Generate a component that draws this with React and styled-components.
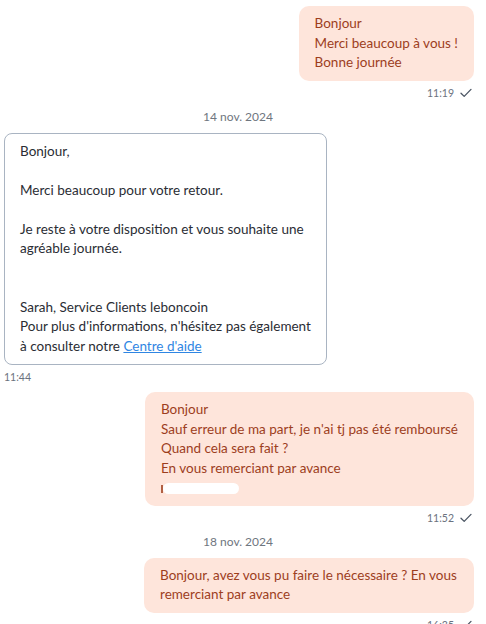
import React from "react";
import styled, { createGlobalStyle } from "styled-components";

const Global = createGlobalStyle`
  html, body { margin: 0; padding: 0; background: #ffffff; overflow: hidden; }
  body { font-family: "Lato", "Open Sans", sans-serif; }
`;

const Thread = styled.div`
  display: flex;
  flex-direction: column;
  padding: 6px 12px 0 4px;
  width: 486px;
  box-sizing: border-box;
`;

const Group = styled.div`
  display: flex;
  flex-direction: column;
  align-items: ${(p) => (p.$mine ? "flex-end" : "flex-start")};
  margin-top: ${(p) => p.$top || 0}px;
`;

const Bubble = styled.div`
  background: #fee5db;
  color: #9d3e1d;
  border-radius: 10px;
  padding: 8px 16px;
  max-width: 330px;
  box-sizing: border-box;
  font-size: 13.5px;
  line-height: 19.5px;
`;

const Card = styled.div`
  background: #ffffff;
  color: #2a2d34;
  border: 1px solid #a9b4c2;
  border-radius: 8px;
  padding: 8px 15px;
  max-width: 330px;
  box-sizing: border-box;
  font-size: 13.5px;
  line-height: 19.5px;
`;

const Line = styled.div`
  min-height: 19.5px;
`;

const Link = styled.a`
  color: #2f86e3;
  text-decoration: underline;
`;

const Meta = styled.div`
  display: flex;
  align-items: center;
  gap: 6px;
  margin-top: 4px;
  height: 16px;
  font-size: 10.5px;
  color: #6b7280;
  padding-right: ${(p) => (p.$mine ? "2px" : "0")};
`;

const DateLabel = styled.div`
  align-self: center;
  margin-top: ${(p) => p.$top}px;
  margin-bottom: 8px;
  height: 16px;
  line-height: 16px;
  font-size: 12px;
  color: #6f7680;
  transform: translateX(-1px);
`;

const Redacted = styled.span`
  display: inline-flex;
  align-items: center;
  height: 12px;
  vertical-align: middle;
`;

const Tick = styled.span`
  width: 2px;
  height: 8px;
  background: #9d3e1d;
  opacity: 0.8;
`;

const Blob = styled.span`
  width: 76px;
  height: 11px;
  background: #ffffff;
  border-radius: 6px;
`;

const Check = () => (
  <svg width="12" height="10" viewBox="0 0 12 10" fill="none">
    <path d="M1 5.2 L4.2 8.4 L11 1.4" stroke="#4b5563" strokeWidth="1.3" strokeLinecap="round" strokeLinejoin="round" />
  </svg>
);

export default function App() {
  return (
    <>
      <Global />
      <Thread>
        <Group $mine>
          <Bubble>
            <Line>Bonjour</Line>
            <Line>Merci beaucoup à vous !</Line>
            <Line>Bonne journée</Line>
          </Bubble>
          <Meta $mine>
            <span>11:19</span>
            <Check />
          </Meta>
        </Group>

        <DateLabel $top={8}>14 nov. 2024</DateLabel>

        <Group>
          <Card>
            <Line>Bonjour,</Line>
            <Line />
            <Line>Merci beaucoup pour votre retour.</Line>
            <Line />
            <Line>Je reste à votre disposition et vous souhaite une</Line>
            <Line>agréable journée.</Line>
            <Line />
            <Line />
            <Line>Sarah, Service Clients leboncoin</Line>
            <Line>Pour plus d'informations, n'hésitez pas également</Line>
            <Line>
              à consulter notre <Link href="#">Centre d'aide</Link>
            </Line>
          </Card>
          <Meta>
            <span>11:44</span>
          </Meta>
        </Group>

        <Group $mine $top={7}>
          <Bubble>
            <Line>Bonjour</Line>
            <Line>Sauf erreur de ma part, je n'ai tj pas été remboursé</Line>
            <Line>Quand cela sera fait ?</Line>
            <Line>En vous remerciant par avance</Line>
            <Line>
              <Redacted>
                <Tick />
                <Blob />
              </Redacted>
            </Line>
          </Bubble>
          <Meta $mine>
            <span>11:52</span>
            <Check />
          </Meta>
        </Group>

        <DateLabel $top={8}>18 nov. 2024</DateLabel>

        <Group $mine>
          <Bubble>
            Bonjour, avez vous pu faire le nécessaire ? En vous remerciant par avance
          </Bubble>
          <Meta $mine>
            <span>16:35</span>
            <Check />
          </Meta>
        </Group>
      </Thread>
    </>
  );
}
